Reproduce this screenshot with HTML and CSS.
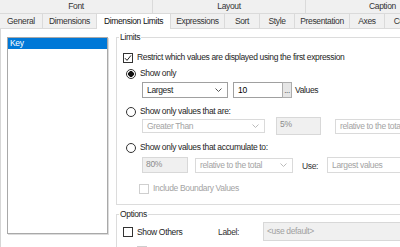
FILE: index.html
```html
<!DOCTYPE html>
<html lang="en">
<head>
    <meta charset="UTF-8">
    <meta name="viewport" content="width=device-width, initial-scale=1.0">
    <title>Chart Properties</title>
    <link rel="stylesheet" href="styles.css">
</head>
<body>
    <!-- Tab group headers -->
    <div class="tab-groups">
        <div class="tab-group">Font</div>
        <div class="tab-group">Layout</div>
        <div class="tab-group caption-group">Caption</div>
    </div>

    <!-- Tabs -->
    <div class="tabs">
        <div class="tab tab-general">General</div>
        <div class="tab tab-dimensions">Dimensions</div>
        <div class="tab tab-limits active">Dimension Limits</div>
        <div class="tab tab-expressions">Expressions</div>
        <div class="tab tab-small">Sort</div>
        <div class="tab tab-small">Style</div>
        <div class="tab tab-presentation">Presentation</div>
        <div class="tab tab-small">Axes</div>
        <div class="tab tab-colors">Colors</div>
    </div>

    <div class="panel">
        <div class="dim-list">
            <div class="dim-item selected">Key</div>
        </div>

        <div class="settings">
            <fieldset class="group limits">
                <legend>Limits</legend>

                <div class="row line restrict-row">
                    <span class="checkbox">
                        <svg width="8" height="8" viewBox="0 0 8 8"><polyline points="1,4.2 3,6.4 7,1.4" fill="none" stroke="#222" stroke-width="1"/></svg>
                    </span>
                    <span class="gap">Restrict which values are displayed using the first expression</span>
                </div>

                <div class="row line radio-row show-only-row">
                    <span class="radio checked"></span>
                    <span class="gap">Show only</span>
                </div>

                <div class="row indent largest-row">
                    <div class="select select-largest">
                        <span>Largest</span>
                        <svg width="7" height="4" viewBox="0 0 7 4"><polyline points="0.5,0.5 3.5,3.5 6.5,0.5" fill="none" stroke="#555"/></svg>
                    </div>
                    <div class="number-input">10</div>
                    <div class="dots-button">...</div>
                    <span class="values-text">Values</span>
                </div>

                <div class="row line radio-row values-row">
                    <span class="radio"></span>
                    <span class="gap">Show only values that are:</span>
                </div>

                <div class="row indent greater-row">
                    <div class="select disabled select-greater">
                        <span>Greater Than</span>
                        <svg width="7" height="4" viewBox="0 0 7 4"><polyline points="0.5,0.5 3.5,3.5 6.5,0.5" fill="none" stroke="#bbb"/></svg>
                    </div>
                    <div class="field field-percent">5%</div>
                    <div class="select disabled select-relative-cut">
                        <span>relative to the total</span>
                    </div>
                </div>

                <div class="row line radio-row accumulate-row">
                    <span class="radio"></span>
                    <span class="gap">Show only values that accumulate to:</span>
                </div>

                <div class="row indent accumulate-fields">
                    <div class="field field-accumulate">80%</div>
                    <div class="select disabled select-relative">
                        <span>relative to the total</span>
                        <svg width="7" height="4" viewBox="0 0 7 4"><polyline points="0.5,0.5 3.5,3.5 6.5,0.5" fill="none" stroke="#bbb"/></svg>
                    </div>
                    <span class="use-text">Use:</span>
                    <div class="select disabled select-use">
                        <span>Largest values</span>
                    </div>
                </div>

                <div class="row line boundary-row">
                    <span class="checkbox disabled"></span>
                    <span class="gap disabled-text">Include Boundary Values</span>
                </div>
            </fieldset>

            <fieldset class="group options">
                <legend>Options</legend>

                <div class="row others-row">
                    <span class="checkbox"></span>
                    <span class="gap others-text">Show Others</span>
                    <span class="label-text">Label:</span>
                    <div class="field field-label">&lt;use default&gt;</div>
                </div>

                <div class="row line next-row">
                    <span class="checkbox disabled indent-check"></span>
                </div>
            </fieldset>
        </div>
    </div>
</body>
</html>
```

FILE: styles.css
```css
body {
    margin: 0;
    width: 400px;
    height: 247px;
    overflow: hidden;
    background-color: #ffffff;
    font-family: "Liberation Sans", Arial, sans-serif;
    font-size: 8.5px;
    letter-spacing: -0.35px;
    color: #1e1e1e;
}

/* Tabs */
.tab-groups {
    display: flex;
    height: 13px;
    line-height: 13px;
    background-color: #f0f0f0;
    border-bottom: 1px solid #dadada;
    width: 460px;
}

.tab-group {
    flex: none;
    width: 152px;
    border-right: 1px solid #dadada;
    text-align: center;
    color: #333;
}

.caption-group {
    width: 153px;
}

.tabs {
    display: flex;
    height: 14px;
    line-height: 14px;
    background-color: #f0f0f0;
    border-bottom: 1px solid #dadada;
    width: 460px;
}

.tab {
    flex: none;
    text-align: center;
    border-right: 1px solid #dadada;
    color: #333;
}

.tab-general { width: 42px; }
.tab-dimensions { width: 53px; }
.tab-limits { width: 73px; }
.tab-expressions { width: 53px; }
.tab-small { width: 34px; }
.tab-presentation { width: 54px; }
.tab-colors { width: 40px; }

.tab.active {
    background-color: #ffffff;
    height: 15px;
    margin-bottom: -1px;
    color: #111;
}

/* Panel */
.panel {
    display: flex;
    height: 218px;
    border-left: 1px solid #d6d6d6;
}

.dim-list {
    flex: none;
    width: 99px;
    height: 195px;
    margin: 8px 0 0 6px;
    border: 1px solid #a9a9a9;
    box-shadow: 1px 1px 0 #dcdcdc;
    background-color: #ffffff;
}

.dim-item {
    height: 11px;
    line-height: 11px;
    padding-left: 2px;
}

.dim-item.selected {
    background-color: #0078d7;
    color: #ffffff;
}

.settings {
    flex: none;
    width: 320px;
    margin-left: 8px;
    padding-top: 3px;
}

/* Group boxes */
.group {
    margin: 0;
    padding: 0 0 0 6px;
    border: 1px solid #dcdcdc;
    min-width: 0;
}

.group legend {
    padding: 0 1px;
    margin-left: -4px;
    line-height: 11px;
}

.limits {
    padding-bottom: 10px;
}

.options {
    margin-top: 4px;
    height: 40px;
}

.row {
    display: flex;
    align-items: center;
}

.line {
    height: 11px;
    line-height: 11px;
}

.gap {
    margin-left: 4px;
    white-space: nowrap;
}

.indent {
    margin-left: 19px;
}

.restrict-row { margin-top: 9px; }
.show-only-row { margin-top: 5px; }
.largest-row { margin-top: 3px; height: 16px; }
.values-row { margin-top: 8px; }
.greater-row { margin-top: 0; height: 18px; }
.accumulate-row { margin-top: 7px; }
.accumulate-fields { margin-top: 4px; height: 16px; }
.boundary-row { margin-top: 10px; }

.radio-row .radio {
    margin-left: 3px;
}

/* Controls */
.checkbox {
    flex: none;
    box-sizing: border-box;
    width: 10px;
    height: 10px;
    border: 1px solid #333;
    background-color: #ffffff;
    display: flex;
    align-items: center;
    justify-content: center;
}

.checkbox.disabled {
    border-color: #cfcfcf;
}

.boundary-row .checkbox {
    margin-left: 16px;
}

.disabled-text {
    color: #a3a3a3;
}

.radio {
    flex: none;
    box-sizing: border-box;
    width: 10px;
    height: 10px;
    border: 1px solid #333;
    border-radius: 50%;
    background-color: #ffffff;
}

.radio.checked {
    background: radial-gradient(circle, #111 0 2.6px, #fff 3.1px);
}

.select {
    flex: none;
    box-sizing: border-box;
    display: flex;
    align-items: center;
    justify-content: space-between;
    padding: 0 5px 0 4px;
    border: 1px solid #a0a0a0;
    background-color: #ffffff;
    white-space: nowrap;
    overflow: hidden;
}

.select.disabled {
    border-color: #dadada;
    color: #a3a3a3;
}

.select-largest {
    width: 86px;
    height: 16px;
}

.number-input {
    flex: none;
    box-sizing: border-box;
    width: 49px;
    height: 16px;
    margin-left: 5px;
    padding-left: 4px;
    line-height: 14px;
    border: 1px solid #a0a0a0;
    border-right: none;
    color: #000;
}

.dots-button {
    flex: none;
    box-sizing: border-box;
    width: 10px;
    height: 16px;
    border: 1px solid #adadad;
    background-color: #e6e6e6;
    font-size: 8px;
    line-height: 16px;
    text-align: center;
    color: #333;
}

.values-text {
    margin-left: 3px;
}

.select-greater {
    width: 123px;
    height: 14px;
    align-self: center;
}

.field {
    flex: none;
    box-sizing: border-box;
    padding: 1px 3px;
    line-height: 11px;
    border: 1px solid #d8d8d8;
    background-color: #f0f0f0;
    color: #8c8c8c;
    white-space: nowrap;
}

.field-percent {
    width: 45px;
    height: 18px;
    margin-left: 11px;
}

.select-relative-cut {
    width: 90px;
    height: 15px;
    margin-left: 14px;
}

.field-accumulate {
    width: 46px;
    height: 16px;
}

.select-relative {
    width: 98px;
    height: 15px;
    margin-left: 7px;
}

.use-text {
    margin-left: 9px;
    align-self: flex-end;
    line-height: 13px;
    color: #333;
}

.select-use {
    width: 90px;
    height: 16px;
    margin-left: 9px;
}

.others-row {
    margin-top: 2px;
    height: 19px;
}

.others-text {
    width: 81px;
}

.label-text {
    width: 45px;
    color: #333;
}

.field-label {
    width: 150px;
    height: 19px;
    padding: 3px 3px;
    color: #a0a0a0;
}

.next-row {
    margin-top: 4px;
}

.indent-check {
    margin-left: 14px;
}
```
